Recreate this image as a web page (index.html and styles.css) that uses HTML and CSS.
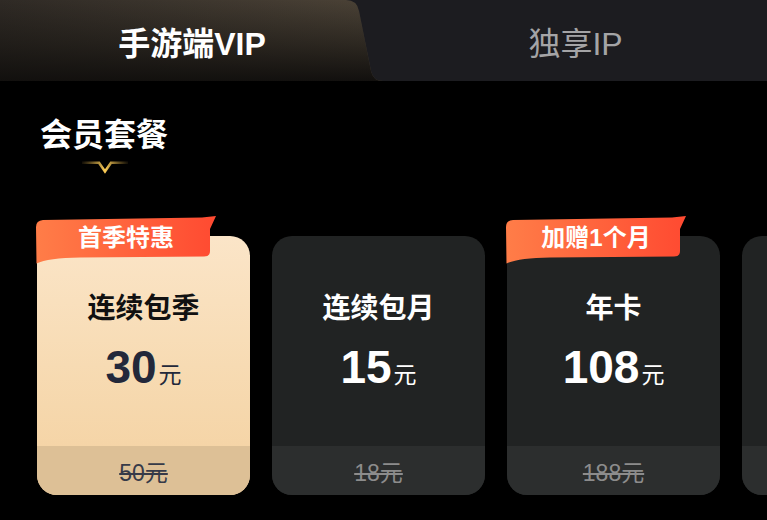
FILE: index.html
```html
<!DOCTYPE html>
<html lang="zh-CN">
<head>
<meta charset="utf-8">
<title>会员套餐</title>
<link rel="stylesheet" href="styles.css">
</head>
<body>
<div class="page">
  <div class="tabs">
    <div class="tab tab-active"><span>手游端VIP</span></div>
    <div class="tab tab-inactive"><span>独享IP</span></div>
  </div>

  <div class="section">
    <h2 class="section-title">会员套餐</h2>
    <svg class="chevron" width="46" height="13" viewBox="0 0 46 13">
      <defs>
        <linearGradient id="gold" x1="0" y1="0" x2="1" y2="0">
          <stop offset="0" stop-color="#b08a3a" stop-opacity="0.1"/>
          <stop offset="0.5" stop-color="#ffcf57"/>
          <stop offset="1" stop-color="#b08a3a" stop-opacity="0.1"/>
        </linearGradient>
      </defs>
      <path d="M0 1.8 H17 L23 10.5 L29 1.8 H46" fill="none" stroke="url(#gold)" stroke-width="2.6" stroke-linejoin="miter"/>
    </svg>
  </div>

  <div class="cards">
    <div class="card card-light">
      <div class="badge">
        <svg class="badge-bg" width="182" height="48" viewBox="0 0 182 48">
          <defs>
            <linearGradient id="rib1" x1="0" y1="0" x2="1" y2="0">
              <stop offset="0" stop-color="#ff7d48"/>
              <stop offset="1" stop-color="#ff4a31"/>
            </linearGradient>
          </defs>
          <path d="M0 11 Q0 4.5 7 4 L166 1.5 L180 0 L174 13 L174 35 Q174 40.5 168 40.5 L44 41.5 Q12 42 0.5 47.5 Z" fill="url(#rib1)"/>
        </svg>
        <span class="badge-text">首季特惠</span>
      </div>
      <div class="card-main">
        <div class="card-title">连续包季</div>
        <div class="price"><span class="num">30</span><span class="unit">元</span></div>
      </div>
      <div class="card-foot"><s>50元</s></div>
    </div>

    <div class="card card-dark">
      <div class="card-main">
        <div class="card-title">连续包月</div>
        <div class="price"><span class="num">15</span><span class="unit">元</span></div>
      </div>
      <div class="card-foot"><s>18元</s></div>
    </div>

    <div class="card card-dark">
      <div class="badge">
        <svg class="badge-bg" width="182" height="48" viewBox="0 0 182 48">
          <defs>
            <linearGradient id="rib2" x1="0" y1="0" x2="1" y2="0">
              <stop offset="0" stop-color="#ff7d48"/>
              <stop offset="1" stop-color="#ff4a31"/>
            </linearGradient>
          </defs>
          <path d="M0 11 Q0 4.5 7 4 L166 1.5 L180 0 L174 13 L174 35 Q174 40.5 168 40.5 L44 41.5 Q12 42 0.5 47.5 Z" fill="url(#rib2)"/>
        </svg>
        <span class="badge-text">加赠1个月</span>
      </div>
      <div class="card-main">
        <div class="card-title">年卡</div>
        <div class="price"><span class="num">108</span><span class="unit">元</span></div>
      </div>
      <div class="card-foot"><s>188元</s></div>
    </div>

    <div class="card card-dark">
      <div class="card-main"></div>
      <div class="card-foot"></div>
    </div>
  </div>
</div>
</body>
</html>
```
FILE: styles.css
```css
* { box-sizing: border-box; }

html, body {
  margin: 0;
  padding: 0;
  background: #000;
}

body {
  font-family: "Liberation Sans", "Noto Sans CJK SC", sans-serif;
  color: #fff;
}

.page {
  width: 767px;
  height: 520px;
  overflow: hidden;
  background: #000;
}

/* tabs */
.tabs {
  display: flex;
  height: 81px;
  background: #1c1c20;
}

.tab {
  display: flex;
  align-items: center;
  justify-content: center;
  font-size: 32px;
}

.tab-active {
  width: 383px;
  flex-shrink: 0;
  padding-left: 12px;
  padding-right: 11px;
  font-weight: 700;
  color: #fff;
  background:
    linear-gradient(180deg, rgba(20, 18, 15, 0) 0%, rgba(20, 18, 15, 0.55) 55%, #12100e 100%),
    linear-gradient(90deg, #2f2a25 0%, #4c4337 100%);
  clip-path: path("M0 0 H346 Q357 0 359 11 L371 71 Q373 81 383 81 H0 Z");
}

.tab-inactive {
  flex: 1;
  margin-left: -11px;
  padding-left: 12px;
  color: #a4a4a6;
  font-weight: 400;
}

/* section title */
.section {
  padding-left: 40px;
}

.section-title {
  margin: 37px 0 0;
  font-size: 32px;
  line-height: 34px;
  font-weight: 700;
  color: #fff;
}

.chevron {
  display: block;
  margin: 9px 0 0 42px;
}

/* cards */
.cards {
  display: flex;
  gap: 22px;
  padding: 62px 0 0 37px;
}

.card {
  position: relative;
  flex-shrink: 0;
  width: 213px;
  height: 259px;
  border-radius: 20px;
  display: flex;
  flex-direction: column;
}

.card-light {
  background: linear-gradient(180deg, #fbe5c8 0%, #f7dbb3 50%, #f4d1a0 100%);
  color: #111;
}

.card-dark {
  background: #212323;
  color: #fff;
}

.card-main {
  flex: 1;
  padding-top: 57px;
  text-align: center;
}

.card-title {
  font-size: 28px;
  line-height: 32px;
  font-weight: 700;
}

.price {
  display: flex;
  justify-content: center;
  align-items: baseline;
  margin-top: 17px;
}

.num {
  font-size: 46px;
  line-height: 50px;
  font-weight: 700;
}

.unit {
  font-size: 23px;
  margin-left: 2px;
}

.card-light .price {
  color: #23283a;
}

.card-foot {
  height: 49px;
  display: flex;
  align-items: center;
  justify-content: center;
  font-size: 23px;
  border-radius: 0 0 20px 20px;
}

.card-foot s {
  text-decoration-thickness: 2px;
}

.card-light .card-foot {
  background: #ddc096;
  color: #363a48;
}

.card-dark .card-foot {
  background: #2c2e2e;
  color: #8c8c8c;
}

/* badge ribbon */
.badge {
  position: absolute;
  left: -1px;
  top: -20px;
  width: 182px;
  height: 48px;
}

.badge-bg {
  position: absolute;
  left: 0;
  top: 0;
}

.badge-text {
  position: relative;
  display: block;
  width: 180px;
  text-align: center;
  font-size: 24px;
  line-height: 44px;
  font-weight: 700;
  color: #fff;
}
```
